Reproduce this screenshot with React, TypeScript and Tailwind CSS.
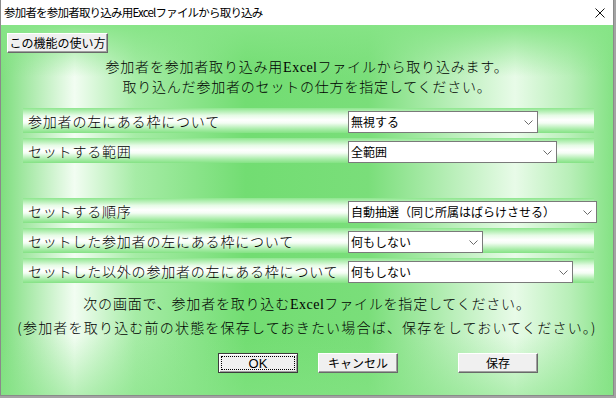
import React from "react";

const jp = "font-['Noto_Sans_CJK_JP','Noto_Sans',sans-serif]";

function Chevron() {
  return (
    <svg width="9" height="5" viewBox="0 0 9 5" className="shrink-0">
      <polyline points="0.5,0.5 4.5,4.5 8.5,0.5" fill="none" stroke="#6b6b6b" strokeWidth="1" />
    </svg>
  );
}

function Select({ value, w }: { value: string; w: string }) {
  return (
    <div className={`${w} h-[22px] shrink-0 bg-white border border-[#7a7a7a] flex items-center justify-between pl-[2px] pr-[4px] text-[12px] text-black leading-none`}>
      <span className="whitespace-nowrap">{value}</span>
      <Chevron />
    </div>
  );
}

function Row({ label, value, w, mt }: { label: string; value: string; w: string; mt: string }) {
  return (
    <div className={`${mt} ml-[22px] mr-[19px] h-[25px] flex items-end bg-[linear-gradient(to_bottom,#8ee68e_0%,#e6fbe6_30%,#ffffff_48%,#f4fdf4_60%,#a8eca8_85%,#84e284_100%)]`}>
      <div className="w-[325px] shrink-0 self-center pl-[5px] text-[14px] tracking-[0.8px] text-black whitespace-nowrap leading-none font-light">
        {label}
      </div>
      <Select value={value} w={w} />
    </div>
  );
}

function Btn({ children, w, def }: { children: React.ReactNode; w: string; def?: boolean }) {
  if (def) {
    return (
      <div className={`${w} h-[20px] flex border border-[#3c3c3c] bg-[#f0f0f0] shadow-[inset_1px_1px_#ffffff,inset_-1px_-1px_#a0a0a0]`}>
        <div className="flex-1 m-[2px] border border-dotted border-black flex items-center justify-center text-[13px] font-['Liberation_Sans',sans-serif] leading-none">
          {children}
        </div>
      </div>
    );
  }
  return (
    <div className={`${w} h-[20px] flex items-center justify-center bg-[#f0f0f0] border border-t-white border-l-white border-b-[#696969] border-r-[#696969] shadow-[inset_-1px_-1px_#a0a0a0] text-[12px] leading-none`}>
      {children}
    </div>
  );
}

export default function App() {
  return (
    <div className={`w-[616px] h-[398px] bg-[#a3a3a3] ${jp}`}>
      <div className="w-[614px] h-[396px] flex flex-col border-l border-r border-b border-[#8a8a8a]">
        <div className="h-[25px] bg-white flex items-center justify-between pl-[3px] pr-[8px]">
          <span className="text-[11.5px] tracking-[-0.8px] text-black leading-none">参加者を参加者取り込み用Excelファイルから取り込み</span>
          <svg width="10" height="10" viewBox="0 0 10 10">
            <path d="M0.5 0.5 L9.5 9.5 M9.5 0.5 L0.5 9.5" stroke="#111" strokeWidth="1" fill="none" />
          </svg>
        </div>
        <div className="flex-1 flex flex-col bg-[linear-gradient(to_bottom,rgba(134,228,134,0.95)_0%,rgba(134,228,134,0)_14%,rgba(134,228,134,0)_84%,rgba(134,228,134,0.55)_100%),linear-gradient(to_right,#7ede7e_0%,#f2fdf2_12%,#a6eca6_22%,#72dd72_40%,#7ade7a_60%,#e8fbe8_84%,#b8efb8_93%,#84e284_100%)]">
          <div className="mt-[8px] ml-[6px] flex">
            <Btn w="w-[101px]">この機能の使い方</Btn>
          </div>
          <div className="mt-[4px] flex flex-col items-center text-[14px] leading-[19px] tracking-[0.8px] text-black font-light">
            <div className="whitespace-nowrap">参加者を参加者取り込み用<span className="font-['Liberation_Serif',serif] tracking-[0.5px]">Excel</span>ファイルから取り込みます。</div>
            <div className="whitespace-nowrap">取り込んだ参加者のセットの仕方を指定してください。</div>
          </div>
          <Row mt="mt-[12px]" label="参加者の左にある枠について" value="無視する" w="w-[190px]" />
          <Row mt="mt-[5px]" label="セットする範囲" value="全範囲" w="w-[209px]" />
          <Row mt="mt-[35px]" label="セットする順序" value="自動抽選（同じ所属はばらけさせる）" w="w-[249px]" />
          <Row mt="mt-[5px]" label="セットした参加者の左にある枠について" value="何もしない" w="w-[135px]" />
          <Row mt="mt-[5px]" label="セットした以外の参加者の左にある枠について" value="何もしない" w="w-[225px]" />
          <div className="mt-[9px] flex flex-col items-center text-[14px] leading-[22px] text-black font-light">
            <div className="whitespace-nowrap tracking-[0.8px]">次の画面で、参加者を取り込む<span className="font-['Liberation_Serif',serif] tracking-[0.5px]">Excel</span>ファイルを指定してください。</div>
            <div className="whitespace-nowrap tracking-[1.2px]">(参加者を取り込む前の状態を保存しておきたい場合ば、保存をしておいてください。)</div>
          </div>
          <div className="mt-[15px] ml-[217px] flex gap-[20px]">
            <Btn w="w-[80px]" def>OK</Btn>
            <Btn w="w-[80px]">キャンセル</Btn>
            <div className="ml-[40px] flex">
              <Btn w="w-[80px]">保存</Btn>
            </div>
          </div>
        </div>
      </div>
    </div>
  );
}
